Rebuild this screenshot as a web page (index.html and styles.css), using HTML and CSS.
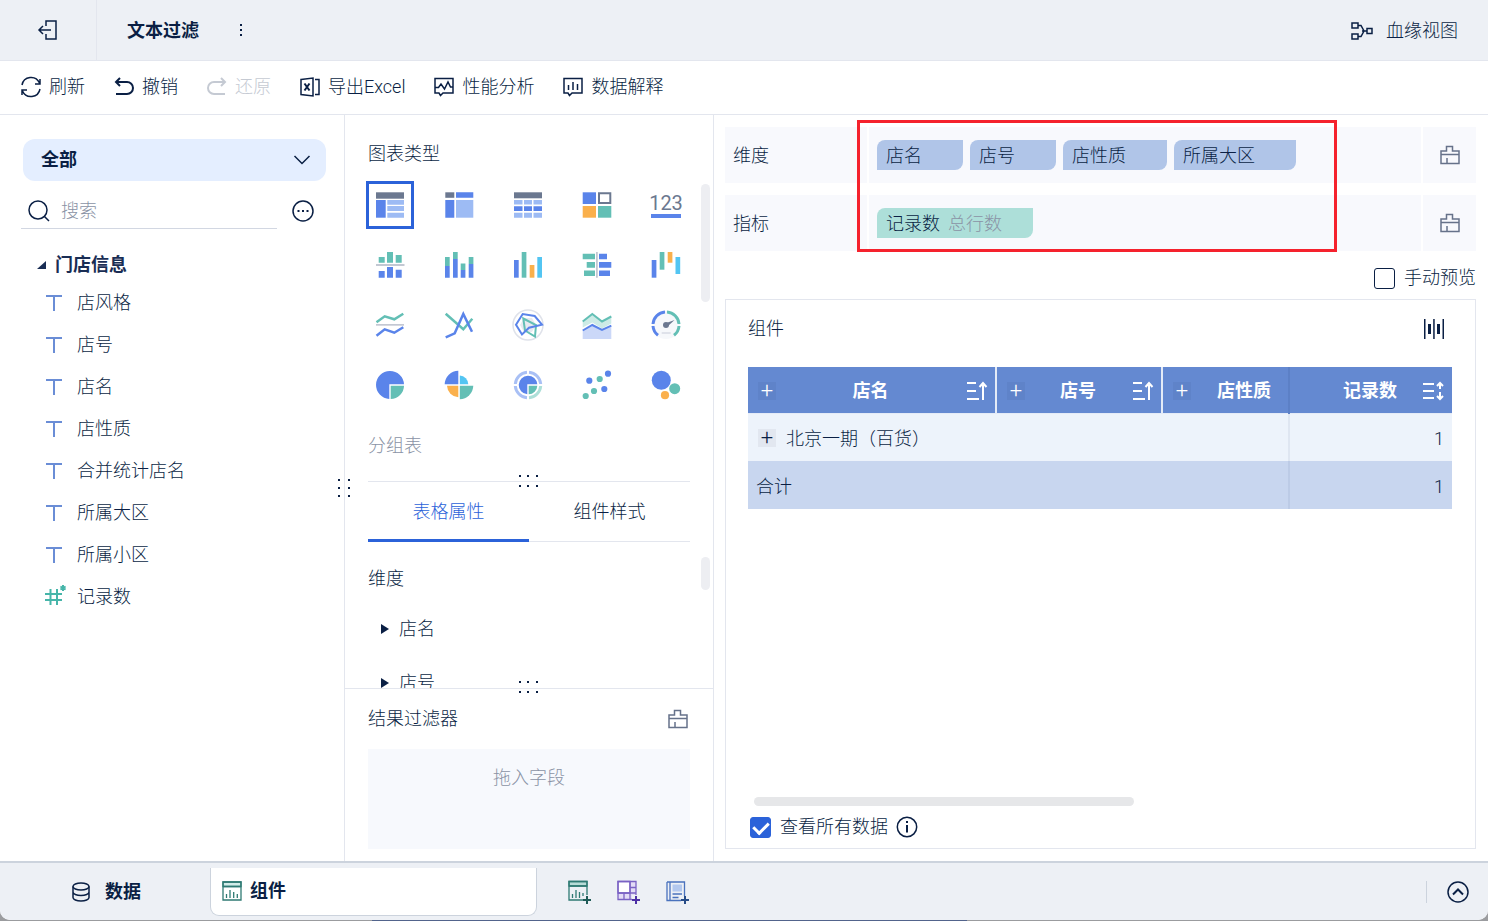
FILE: index.html
```html
<!DOCTYPE html>
<html lang="zh-CN">
<head>
  <meta charset="UTF-8" />
  <meta name="viewport" content="width=device-width, initial-scale=1.0" />
  <title>文本过滤</title>
  <link rel="stylesheet" href="styles.css">
</head>
<body>
  <div class="app">
    <header class="header">
      <button class="back" aria-label="返回">
        <svg class="icon" width="22" height="22" viewBox="0 0 22 22"><path d="M9 7V2h10v18H9v-5M14 11H2M6 7l-4 4 4 4"/></svg>
      </button>
      <h1 class="title">文本过滤</h1>
      <button class="more" aria-label="更多">
        <svg class="dots" width="4" height="16" viewBox="0 0 4 16"><path d="M1 2h2v2H1zM1 7h2v2H1zM1 12h2v2H1z"/></svg>
      </button>
      <button class="lineage">
        <svg class="icon" width="22" height="20" viewBox="0 0 22 20"><path d="M1 2h6v5H1zM1 13h6v5H1zM7 4.500h3l3 5.500-3 5.500H7M11 10h5M16 7.500h5v5h-5z"/></svg>
        血缘视图
      </button>
    </header>

    <nav class="toolbar">
      <button class="tool">
        <svg class="icon" width="20" height="20" viewBox="0 0 20 20"><path d="M1 8a9.200 9.200 0 0 1 17.500-2M19 2v5h-5M19 12a9.200 9.200 0 0 1-17.500 2M1 18v-5h5"/></svg>
        刷新
      </button>
      <button class="tool">
        <svg class="icon bold" width="20" height="20" viewBox="0 0 20 20"><path d="M6 1L2 5l4 4M2 5h11a6 6 0 0 1 0 12H2"/></svg>
        撤销
      </button>
      <button class="tool" disabled>
        <svg class="icon bold" width="20" height="20" viewBox="0 0 20 20"><path d="M14 1l4 4-4 4M18 5H7a6 6 0 0 0 0 12H18"/></svg>
        还原
      </button>
      <button class="tool">
        <svg class="icon" width="20" height="20" viewBox="0 0 20 20"><path d="M1 2.500l12-1.500v18L1 17.500zM15 2.500h4v15h-4"/><path class="thick" d="M4.500 6.500l5 7M9.500 6.500l-5 7"/></svg>
        导出Excel
      </button>
      <button class="tool">
        <svg class="icon" width="20" height="20" viewBox="0 0 20 20"><path d="M1 1.500h18v14.500H9L6.500 18.500 5 16H1zM1 10.500h3.500L7 7l3.500 5 3.500-7 2.500 5H19"/></svg>
        性能分析
      </button>
      <button class="tool">
        <svg class="icon" width="20" height="20" viewBox="0 0 20 20"><path d="M1 1.500h18v14.500H9L6.500 18.500 5 16H1zM5.500 8v5M10 5v8M14.500 7v6"/></svg>
        数据解释
      </button>
    </nav>

    <main class="main">
      <aside class="fields">
        <div class="table-select">
          <select aria-label="数据表">
            <option>全部</option>
          </select>
          <svg class="icon chevron" width="18" height="18" viewBox="0 0 18 18"><path d="M1.500 5L9 12.500 16.500 5"/></svg>
        </div>
        <div class="search-row">
          <label class="search">
            <svg class="icon" width="22" height="22" viewBox="0 0 22 22"><circle cx="10" cy="10" r="9"/><path d="M16.500 16.500l4.500 4.500"/></svg>
            <input type="text" placeholder="搜索" aria-label="搜索">
          </label>
          <button class="search-more" aria-label="更多操作">
            <svg class="icon" width="22" height="22" viewBox="0 0 22 22"><circle cx="11" cy="11" r="10"/><path class="thick" d="M5.500 11h2M10 11h2M14.500 11h2"/></svg>
          </button>
        </div>
        <h2 class="group-title">
          <svg width="10" height="10" viewBox="0 0 10 10"><path d="M9 1v8H0z" fill="#192d54"/></svg>
          门店信息
        </h2>
        <ul class="field-list">
          <li><svg class="icon-text" width="18" height="18" viewBox="0 0 18 18"><path d="M1 2h16M9 2v15"/></svg>店风格</li>
          <li><svg class="icon-text" width="18" height="18" viewBox="0 0 18 18"><path d="M1 2h16M9 2v15"/></svg>店号</li>
          <li><svg class="icon-text" width="18" height="18" viewBox="0 0 18 18"><path d="M1 2h16M9 2v15"/></svg>店名</li>
          <li><svg class="icon-text" width="18" height="18" viewBox="0 0 18 18"><path d="M1 2h16M9 2v15"/></svg>店性质</li>
          <li><svg class="icon-text" width="18" height="18" viewBox="0 0 18 18"><path d="M1 2h16M9 2v15"/></svg>合并统计店名</li>
          <li><svg class="icon-text" width="18" height="18" viewBox="0 0 18 18"><path d="M1 2h16M9 2v15"/></svg>所属大区</li>
          <li><svg class="icon-text" width="18" height="18" viewBox="0 0 18 18"><path d="M1 2h16M9 2v15"/></svg>所属小区</li>
          <li><svg class="icon-number" width="18" height="18" viewBox="0 0 18 18"><path d="M0 6h17M0 12h17M5.500 1v16M12 1v16"/><path d="M18 -3v6M15.400 -1.500l5.200 3M20.600 -1.500l-5.200 3"/></svg>记录数</li>
        </ul>
        <svg class="grip grip-side" width="14" height="22" viewBox="0 0 14 22"><path d="M1 2h2v2H1zM1 10h2v2H1zM1 18h2v2H1zM11 2h2v2h-2zM11 10h2v2h-2zM11 18h2v2h-2z"/></svg>
      </aside>

      <section class="settings">
        <div class="chart-types">
          <h2 class="label">图表类型</h2>
          <div class="type-grid">
            <button class="type selected" aria-label="分组表">
              <svg width="32" height="32" viewBox="0 0 32 32"><path class="slate" d="M2 3.300h28v6.400H2z"/><path class="blue" d="M2 11h9.700v17.700H2z"/><path class="light" d="M13.300 11H30v4.700H13.300zM13.300 17H30v5H13.300zM13.300 23.700H30v5H13.300z"/></svg>
            </button>
            <button class="type" aria-label="交叉表">
              <svg width="32" height="32" viewBox="0 0 32 32"><path class="slate" d="M2.300 3.300h9v5.500h-9z"/><path class="blue" d="M13 3.300h17.300v5.500H13zM2.300 11h9v17.700h-9z"/><path class="light" d="M13 11h17.300v17.700H13z"/></svg>
            </button>
            <button class="type" aria-label="明细表">
              <svg width="32" height="32" viewBox="0 0 32 32"><path class="slate" d="M2 3.300h28v6H2z"/><path class="light" d="M2 11h8.500v4.500H2zM12 11h8v4.500h-8zM21.500 11H30v4.500h-8.500zM2 23.700h8.500v5H2zM12 23.700h8v5h-8zM21.500 23.700H30v5h-8.500z"/><path class="blue" d="M2 17.300h8.500v4.700H2zM12 17.300h8v4.700h-8zM21.500 17.300H30v4.700h-8.500z"/></svg>
            </button>
            <button class="type" aria-label="颜色表格">
              <svg width="32" height="32" viewBox="0 0 32 32"><path class="blue" d="M1.700 3.300H15V15H1.700z"/><path d="M18 4.300h11.300V14H18z" fill="none" stroke="#6b7890" stroke-width="2"/><path class="orange" d="M1.700 17H15v11.700H1.700z"/><path class="green" d="M17 17h13.300v11.700H17z"/></svg>
            </button>
            <button class="type kpi" aria-label="KPI指标卡"><span>123</span></button>

            <button class="type" aria-label="对比柱形图">
              <svg width="32" height="32" viewBox="0 0 32 32"><path class="green" d="M4.700 8h6v5.700h-6zM13 3h6v10.700h-6zM21.700 6h6v7.700h-6z"/><path class="gray" d="M2 15h28.500v2H2z"/><path class="blue" d="M4.700 22h6v6.700h-6zM13 18h6v10.700h-6zM21.700 20.700h6v8h-6z"/></svg>
            </button>
            <button class="type" aria-label="堆积柱形图">
              <svg width="32" height="32" viewBox="0 0 32 32"><path class="green" d="M2 8h4.700v9H2zM10 3h4.700v7H10zM17.700 14.500h4.700V21h-4.700zM25.700 8h4.700v7h-4.700z"/><path class="blue" d="M2 17h4.700v11.700H2zM10 10h4.700v18.700H10zM17.700 21h4.700v7.700h-4.700zM25.700 15h4.700v13.700h-4.700z"/></svg>
            </button>
            <button class="type" aria-label="分区柱形图">
              <svg width="32" height="32" viewBox="0 0 32 32"><path class="blue" d="M2 11h4.700v17.700H2z"/><path class="green" d="M9.700 3h4.700v25.700H9.700z"/><path class="orange" d="M17.700 16h4.700v12.700h-4.700z"/><path class="cyan" d="M25.300 8H30v20.700h-4.700z"/></svg>
            </button>
            <button class="type" aria-label="对比条形图">
              <svg width="32" height="32" viewBox="0 0 32 32"><path class="green" d="M1.700 4.700H14v5.600H1.700zM5.700 13H14v5.700H5.700zM3 21.500h11v5.500H3z"/><path class="gray" d="M15 3h1.800v25.700H15z"/><path class="blue" d="M18 4.700h8v5.600h-8zM18 13h12.300v5.700H18zM18 21.500h11v5.500H18z"/></svg>
            </button>
            <button class="type" aria-label="瀑布图">
              <svg width="32" height="32" viewBox="0 0 32 32"><path class="blue" d="M1.700 11h4.700v17.700H1.700z"/><path class="green" d="M9.700 3h4.700v17.700H9.700z"/><path class="orange" d="M17.700 3h4.700v10.700h-4.700z"/><path class="cyan" d="M25.500 8h4.700v17h-4.700z"/></svg>
            </button>

            <button class="type" aria-label="范围折线图">
              <svg width="32" height="32" viewBox="0 0 32 32"><path class="line-green" d="M2.500 13.300l8.200-6 9.600 3 9-5.600"/><path class="gray" d="M2 15h28v1.700H2z"/><path class="line-blue" d="M2.500 26.700l8.200-6.400 9.600 3.400 9-5.400"/></svg>
            </button>
            <button class="type" aria-label="折线图">
              <svg width="32" height="32" viewBox="0 0 32 32"><path class="line-green" d="M2.700 4.700l17.600 15.600 9-10.600"/><path class="line-blue" d="M2.700 28.300l9-4L20.300 5 29 22.700"/></svg>
            </button>
            <button class="type" aria-label="雷达图">
              <svg width="32" height="32" viewBox="0 0 32 32"><circle cx="16" cy="16" r="15" fill="none" stroke="#dfe2ea" stroke-width="1.500"/><path d="M8 16l4-7 8 0 4 7-4 7h-8z" fill="#e8eaf0"/><path class="line-green thin" d="M11.300 9.500l12.700 6.500-1 11.500-10-6z"/><path class="line-blue thin" d="M4 15.700l6.700-10.700 12 2 7.300 8.700-13 3-7 6.800z"/></svg>
            </button>
            <button class="type" aria-label="面积图">
              <svg width="32" height="32" viewBox="0 0 32 32"><path d="M1.700 12.500l9.600-7.500 9.700 7.500 9.300-5v7l-9.300 5-9.700-6-9.600 5z" fill="#cdebe6"/><path d="M1.700 21.500l9.600-5.800 9.700 5.300 9.300-4.300V30H1.700z" fill="#cbd8f8"/><path class="line-green thin" d="M1.700 12.500l9.600-7.500 9.700 7.500 9.300-5"/><path class="line-blue thin" d="M1.700 21.500l9.600-5.500 9.700 5 9.300-4.300"/></svg>
            </button>
            <button class="type" aria-label="仪表盘">
              <svg width="32" height="32" viewBox="0 0 32 32"><circle cx="16" cy="16" r="14" fill="#f6f8fb"/><path class="line-blue arc" d="M8 26.300A13 13 0 0 1 3 17M3 15A13 13 0 0 1 15 3"/><path class="line-green arc" d="M17 3a13 13 0 0 1 12 12M29 17a13 13 0 0 1-5 9.300"/><path class="slate" d="M15 14.500l9.500-3.500L17 18z"/><circle class="slate" cx="16" cy="16" r="3"/><path d="M11.700 23h9v2h-9z" fill="#dfe2ea"/></svg>
            </button>

            <button class="type" aria-label="饼图">
              <svg width="32" height="32" viewBox="0 0 32 32"><path class="blue" d="M15.300 30A14 14 0 1 1 30 15.300H15.300z"/><path class="green" d="M16.700 16.700H30A13.500 13.500 0 0 1 16.700 30z"/></svg>
            </button>
            <button class="type" aria-label="玫瑰图">
              <svg width="32" height="32" viewBox="0 0 32 32"><path class="blue" d="M15.300 1.700v13.600H1.700A14 14 0 0 1 15.300 1.700z"/><path class="cyan" d="M16.800 6.500a9 9 0 0 1 8.500 8.800h-8.500z"/><path class="orange" d="M15.300 16.800v11.500A12 12 0 0 1 4 16.800z"/><path class="green" d="M16.800 16.800h13.500a14 14 0 0 1-13.500 13.500z"/></svg>
            </button>
            <button class="type" aria-label="多层饼图">
              <svg width="32" height="32" viewBox="0 0 32 32"><g fill="none" stroke-width="3"><path stroke="#a9c0f5" d="M15 28.700A12.700 12.700 0 0 1 3.300 17M3.300 15A12.700 12.700 0 0 1 15 3.300M17 3.300A12.700 12.700 0 0 1 28.700 15"/><path stroke="#addfd8" d="M28.700 17A12.700 12.700 0 0 1 17 28.700"/></g><path class="blue" d="M15.300 25.300A9.300 9.300 0 1 1 25.300 15.300h-10z"/><path class="green" d="M16.700 16.700h8.600a9 9 0 0 1-8.600 8.600z"/></svg>
            </button>
            <button class="type" aria-label="散点图">
              <svg width="32" height="32" viewBox="0 0 32 32"><g class="blue"><circle cx="8.300" cy="11.700" r="3.100"/><circle cx="27" cy="4.700" r="3.100"/><circle cx="23.300" cy="20" r="3.100"/></g><g class="green"><circle cx="18.700" cy="10" r="3.100"/><circle cx="4.700" cy="27" r="3.100"/><circle cx="13" cy="22" r="3.100"/></g></svg>
            </button>
            <button class="type" aria-label="聚合气泡图">
              <svg width="32" height="32" viewBox="0 0 32 32"><circle class="blue" cx="11.300" cy="11.200" r="9.500"/><circle class="green" cx="24.700" cy="19.700" r="5.500"/><circle class="orange" cx="15" cy="26.200" r="4.100"/></svg>
            </button>
          </div>
          <p class="type-name">分组表</p>
          <span class="thumb thumb-types"></span>
        </div>

        <div class="properties">
          <svg class="grip grip-top" width="22" height="14" viewBox="0 0 22 14"><path d="M2 1h2v2H2zM10 1h2v2h-2zM19 1h2v2h-2zM2 11h2v2H2zM10 11h2v2h-2zM19 11h2v2h-2z"/></svg>
          <div class="tabs">
            <button class="tab active">表格属性</button>
            <button class="tab">组件样式</button>
          </div>
          <div class="property-list">
            <h2 class="label">维度</h2>
            <button class="fold"><svg width="8" height="10" viewBox="0 0 8 10"><path d="M0 0l8 5-8 5z" fill="#0a1f44"/></svg>店名</button>
            <button class="fold"><svg width="8" height="10" viewBox="0 0 8 10"><path d="M0 0l8 5-8 5z" fill="#0a1f44"/></svg>店号</button>
            <span class="thumb thumb-properties"></span>
          </div>
        </div>

        <div class="filter">
          <svg class="grip grip-filter" width="22" height="14" viewBox="0 0 22 14"><path d="M2 1h2v2H2zM10 1h2v2h-2zM19 1h2v2h-2zM2 11h2v2H2zM10 11h2v2h-2zM19 11h2v2h-2z"/></svg>
          <div class="filter-head">
            <h2 class="label">结果过滤器</h2>
            <button aria-label="清空过滤器">
              <svg class="brush" width="20" height="20" viewBox="0 0 20 20"><path d="M1 18.500V6h5.500V1.500h6V6H19v12.500zM1 9.500h18M7 18v-5"/></svg>
            </button>
          </div>
          <div class="dropzone">拖入字段</div>
        </div>
      </section>

      <section class="preview">
        <div class="shelf">
          <div class="shelf-name">维度</div>
          <div class="shelf-body">
            <button class="chip">店名</button>
            <button class="chip">店号</button>
            <button class="chip">店性质</button>
            <button class="chip">所属大区</button>
          </div>
          <button class="shelf-clear" aria-label="清空维度">
            <svg class="brush" width="20" height="20" viewBox="0 0 20 20"><path d="M1 18.500V6h5.500V1.500h6V6H19v12.500zM1 9.500h18M7 18v-5"/></svg>
          </button>
        </div>
        <div class="shelf">
          <div class="shelf-name">指标</div>
          <div class="shelf-body">
            <button class="chip measure">记录数 <span>总行数</span></button>
          </div>
          <button class="shelf-clear" aria-label="清空指标">
            <svg class="brush" width="20" height="20" viewBox="0 0 20 20"><path d="M1 18.500V6h5.500V1.500h6V6H19v12.500zM1 9.500h18M7 18v-5"/></svg>
          </button>
        </div>
        <div class="highlight"></div>

        <label class="check manual"><input type="checkbox">手动预览</label>

        <div class="widget">
          <div class="widget-head">
            <h2 class="label">组件</h2>
            <button aria-label="列宽">
              <svg width="20" height="20" viewBox="0 0 20 20" fill="#0a1f44"><path d="M0 0h1.500v20H0zM9.200 0h1.500v20H9.200zM18.500 0H20v20h-1.500zM4 5h3v10H4zM13 5h3v10h-3z"/></svg>
            </button>
          </div>
          <table class="grid">
            <colgroup>
              <col class="col-name">
              <col class="col-no">
              <col class="col-kind">
              <col class="col-count">
            </colgroup>
            <thead>
              <tr>
                <th><div class="cell"><button class="expand" aria-label="展开店名">+</button><span>店名</span><svg class="sort" width="22" height="20" viewBox="0 0 22 20"><path d="M2 2h9M2 10h9M2 18h12M18 19V4M14.500 6L18 2l3.500 4"/></svg></div></th>
                <th><div class="cell"><button class="expand" aria-label="展开店号">+</button><span>店号</span><svg class="sort" width="22" height="20" viewBox="0 0 22 20"><path d="M2 2h9M2 10h9M2 18h12M18 19V4M14.500 6L18 2l3.500 4"/></svg></div></th>
                <th><div class="cell"><button class="expand" aria-label="展开店性质">+</button><span>店性质</span></div></th>
                <th><div class="cell"><span>记录数</span><svg class="sort" width="22" height="20" viewBox="0 0 22 20"><path d="M1 3h11M1 10h11M1 17h11M18 2v6M15 5l3-3 3 3M18 11v7M15 15l3 3 3-3"/></svg></div></th>
              </tr>
            </thead>
            <tbody>
              <tr>
                <td colspan="3"><button class="expand" aria-label="展开北京一期">+</button>北京一期（百货）</td>
                <td class="num">1</td>
              </tr>
              <tr class="total">
                <td colspan="3">合计</td>
                <td class="num">1</td>
              </tr>
            </tbody>
          </table>
          <div class="widget-foot">
            <span class="scroll-x"></span>
            <div class="all-data">
              <label class="check"><input type="checkbox" checked>查看所有数据</label>
              <svg class="icon" width="22" height="22" viewBox="0 0 22 22"><circle cx="11" cy="11" r="9.700"/><path class="thick" d="M11 9v7.500M11 5v2"/></svg>
            </div>
          </div>
        </div>
      </section>
    </main>

    <footer class="footer">
      <button class="sheet">
        <svg class="icon" width="18" height="20" viewBox="0 0 18 20"><ellipse cx="9" cy="4.500" rx="8" ry="3.500"/><path d="M1 4.500v11c0 2 3.600 3.500 8 3.500s8-1.500 8-3.500v-11M1 10c0 2 3.600 3.500 8 3.500s8-1.500 8-3.500"/></svg>
        数据
      </button>
      <button class="sheet current">
        <svg width="20" height="20" viewBox="0 0 20 20" fill="none" stroke="#2f7a73" stroke-width="1.300"><path d="M1 1h18v4.500H1z" fill="#d3ece9"/><path d="M1 1h18v18H1zM1 5.500h18M4.500 13v4M8 9v8M11.700 11v6M15.300 13v4"/></svg>
        组件
      </button>
      <div class="add">
        <button aria-label="添加组件">
          <svg width="24" height="24" viewBox="0 0 24 24" fill="none" stroke="#2f7a73" stroke-width="1.300"><path d="M1 1.500h18V6H1z" fill="#b8dcd7"/><path d="M15 20H1V1.500h18V15M1 6h18M4.500 14v4M8 10v8M11.500 12v6M15 13v3"/><path d="M19 16v8M15 20h8" stroke="#1f5b57" stroke-width="2"/></svg>
        </button>
        <button aria-label="添加仪表板">
          <svg width="24" height="24" viewBox="0 0 24 24" fill="none" stroke="#7a62c4" stroke-width="1.300"><path d="M1 1.500h18V15h-4v4.500H1z" fill="#e3dcf6" stroke="none"/><path d="M1 1.500h12V13H1z" fill="#fff"/><path d="M15 19.500H1V1.500h18V15M13 1.500V13M1 13h18M13 7.500h6M7 13v6.500M13 13v6.500"/><path d="M19 16v8M15 20h8" stroke="#4c2fa5" stroke-width="2"/></svg>
        </button>
        <button aria-label="添加报告">
          <svg width="24" height="24" viewBox="0 0 24 24" fill="none" stroke="#4a72bd" stroke-width="1.300"><path d="M1 2h17.500v14M1 2v18.500h14M4 2v18.500"/><path d="M6.500 4.500h9.500v7H6.500z" fill="#b3c8ee" stroke="none"/><path d="M6.500 14h9.500M6.500 17.500h6"/><path d="M19 16v8M15 20h8" stroke="#274c87" stroke-width="2"/></svg>
        </button>
      </div>
      <button class="collapse" aria-label="收起">
        <svg class="icon" width="22" height="22" viewBox="0 0 22 22"><circle cx="11" cy="11" r="10"/><path class="thick" d="M6 13.500l5-5 5 5"/></svg>
      </button>
    </footer>
  </div>
</body>
</html>
```
FILE: styles.css
```css
* {
  box-sizing: border-box;
}

body {
  margin: 0;
  background: linear-gradient(90deg, #9b9c9f 25%, #52648c 25%, #52648c 65%, #9b9c9f 65%);
  font-family: Roboto, "Noto Sans CJK SC", sans-serif;
  font-size: 18px;
  font-weight: 300;
  line-height: 24px;
  color: #0a1f44;
}

button,
input,
select {
  font: inherit;
  color: inherit;
}

button {
  display: flex;
  align-items: center;
  padding: 0;
  border: none;
  background: none;
  cursor: pointer;
}

h1,
h2,
p,
ul {
  margin: 0;
  padding: 0;
  font-size: 18px;
}

svg {
  flex: none;
  overflow: visible;
}

.app {
  display: flex;
  flex-direction: column;
  height: calc(100vh - 1px);
  background: #fff;
  border-radius: 0 0 10px 10px;
  overflow: hidden;
}

.icon {
  fill: none;
  stroke: currentColor;
  stroke-width: 1.5;
}

.icon.bold,
.thick {
  stroke-width: 2;
}

.brush {
  fill: none;
  stroke: #66728a;
  stroke-width: 1.5;
}

.label {
  font-weight: 300;
}

/* header */
.header {
  display: flex;
  align-items: center;
  height: 61px;
  padding-right: 30px;
  background: #edf0f5;
  border-bottom: 1px solid #e3e6ee;
}

.back {
  width: 97px;
  height: 60px;
  justify-content: center;
  border-right: 1px solid #e3e6ee;
}

.title {
  padding: 2px 0 0 30px;
  font-weight: 700;
}

.more {
  margin-left: 40px;
}

.dots,
.grip {
  fill: #0a1f44;
}

.lineage {
  margin-left: auto;
  padding-top: 1px;
  gap: 13px;
}

/* toolbar */
.toolbar {
  display: flex;
  align-items: center;
  gap: 29px;
  height: 54px;
  padding: 0 21px 2px;
  border-bottom: 1px solid #e3e6ee;
}

.tool {
  gap: 8px;
}

.tool:disabled {
  color: #c5cad3;
}

.main {
  display: flex;
  flex: 1;
  min-height: 0;
}

/* fields */
.fields {
  position: relative;
  flex: 0 0 345px;
  padding: 24px 18px 0 23px;
  border-right: 1px solid #e3e6ee;
}

.table-select {
  position: relative;
}

.table-select select {
  width: 100%;
  height: 42px;
  padding: 0 18px;
  border: none;
  border-radius: 12px;
  background: #e4eeff;
  font-weight: 700;
  appearance: none;
}

.chevron {
  position: absolute;
  right: 15px;
  top: 12px;
  pointer-events: none;
}

.search-row {
  display: flex;
  align-items: center;
  justify-content: space-between;
  height: 60px;
  padding-right: 12px;
}

.search {
  display: flex;
  align-items: center;
  gap: 11px;
  width: 256px;
  height: 36px;
  margin-left: -2px;
  padding-left: 7px;
  border-bottom: 1px solid #d2d7e2;
}

.search input {
  flex: 1;
  min-width: 0;
  padding: 0;
  border: none;
  outline: none;
  background: none;
}

.search input::placeholder {
  color: #8a93a5;
}

.group-title {
  display: flex;
  align-items: center;
  gap: 8px;
  height: 34px;
  margin-top: 7px;
  padding-left: 14px;
  font-weight: 700;
  color: #192d54;
}

.field-list {
  list-style: none;
}

.field-list li {
  display: flex;
  align-items: center;
  gap: 14px;
  height: 42px;
  padding-left: 22px;
}

.icon-text,
.icon-number {
  fill: none;
  stroke: #6a8dd6;
  stroke-width: 2;
}

.icon-number {
  stroke: #46b5a9;
}

.grip {
  position: absolute;
}

.grip-side {
  right: -7px;
  top: 362px;
}

/* chart settings */
.settings {
  flex: 0 0 369px;
  display: flex;
  flex-direction: column;
  border-right: 1px solid #e3e6ee;
}

.chart-types {
  position: relative;
  padding: 27px 23px 23px;
}

.type-grid {
  display: grid;
  grid-template-columns: repeat(5, 48px);
  justify-content: space-between;
  row-gap: 12px;
  margin: 15px 0 25px -2px;
}

.type {
  height: 48px;
  justify-content: center;
}

.type.selected {
  border: 3px solid #2b62d9;
}

.kpi span {
  display: flex;
  justify-content: center;
  width: 30px;
  border-bottom: 4px solid #5a84ea;
  font-size: 20px;
  font-weight: 400;
  line-height: 22px;
  color: #6b7890;
}

.blue { fill: #5a84ea; }
.light { fill: #9dbbf4; }
.slate { fill: #6b7890; }
.gray { fill: #c3c8d3; }
.green { fill: #63bfb5; }
.orange { fill: #fab04c; }
.cyan { fill: #53c5f2; }

.line-blue,
.line-green {
  fill: none;
  stroke: #5a84ea;
  stroke-width: 2.5;
}

.line-green {
  stroke: #63bfb5;
}

.thin {
  stroke-width: 2;
}

.arc {
  stroke-width: 3;
}

.type-name,
.dropzone {
  color: #8a93a5;
}

.thumb {
  position: absolute;
  right: 3px;
  width: 9px;
  border-radius: 5px;
  background: #edeef2;
}

.thumb-types {
  top: 69px;
  height: 118px;
}

.thumb-properties {
  top: 15px;
  height: 33px;
}

.properties {
  position: relative;
  display: flex;
  flex-direction: column;
  flex: 1;
  min-height: 0;
}

.grip-top,
.grip-filter {
  left: 172px;
  top: -7px;
}

.grip-filter {
  top: -9px;
}

.tabs {
  display: flex;
  height: 61px;
  margin: 0 23px;
  border-top: 1px solid #e3e6ee;
  border-bottom: 1px solid #e3e6ee;
}

.tab {
  flex: 1;
  height: 60px;
  padding-top: 2px;
  justify-content: center;
  border-bottom: 3px solid transparent;
}

.tab.active {
  color: #2b62d9;
  border-bottom-color: #2b62d9;
}

.property-list {
  position: relative;
  flex: 1;
  min-height: 0;
  padding: 25px 23px 0;
  overflow: hidden;
}

.fold {
  gap: 10px;
  height: 54px;
  padding-left: 13px;
}

.property-list .label {
  margin-bottom: 11px;
}

.filter {
  position: relative;
  padding: 18px 23px 12px;
  border-top: 1px solid #e3e6ee;
}

.filter-head,
.widget-head {
  display: flex;
  align-items: center;
  justify-content: space-between;
}

.filter-head {
  padding-right: 2px;
}

.dropzone {
  height: 100px;
  margin-top: 18px;
  padding-top: 17px;
  background: #f7f9fd;
  text-align: center;
}

/* preview */
.preview {
  position: relative;
  flex: 1;
  min-width: 0;
  display: flex;
  flex-direction: column;
  padding: 12px 12px 12px 11px;
}

.shelf {
  display: flex;
  gap: 2px;
  height: 56px;
  margin-bottom: 12px;
}

.shelf-name,
.shelf-body,
.shelf-clear {
  display: flex;
  align-items: center;
  background: #f8f9fd;
}

.shelf-name {
  width: 142px;
  padding: 2px 0 0 8px;
}

.shelf-body {
  flex: 1;
  gap: 7px;
  padding-left: 8px;
}

.shelf-clear {
  width: 53px;
  justify-content: center;
}

.chip {
  height: 30px;
  padding: 1px 41px 0 9px;
  border-radius: 8px 0;
  background: #b0c5e8;
}

.chip.measure {
  gap: 8px;
  padding-right: 31px;
  background: #addfd9;
}

.chip span {
  color: #8a93a5;
}

/* frame round both shelves */
.highlight {
  position: absolute;
  left: 143px;
  top: 5px;
  width: 480px;
  height: 132px;
  border: 3px solid #f5222d;
  pointer-events: none;
}

.check {
  display: flex;
  align-items: center;
  gap: 9px;
}

.check input {
  width: 21px;
  height: 21px;
  margin: 0;
  border: 1px solid #0a1f44;
  border-radius: 3px;
  background: #fff;
  appearance: none;
}

.check input:checked {
  display: flex;
  justify-content: center;
  border-color: #2b62d9;
  background: #2b62d9;
}

.check input:checked::before {
  content: "";
  width: 7px;
  height: 12px;
  margin-top: 1px;
  border: solid #fff;
  border-width: 0 3px 3px 0;
  transform: rotate(45deg);
}

.manual {
  align-self: flex-end;
  margin: 3px 0 9px;
}

.widget {
  flex: 1;
  display: flex;
  flex-direction: column;
  padding: 17px 23px 9px 22px;
  border: 1px solid #e3e6ee;
}

.widget-head {
  padding-right: 8px;
}

.grid {
  width: 100%;
  margin-top: 26px;
  border-collapse: collapse;
  table-layout: fixed;
}

.col-name { width: 248px; }
.col-no { width: 166px; }
.col-kind { width: 127px; }
.col-count { width: 163px; }

.grid th {
  height: 46px;
  padding: 2px 8px 0 10px;
  background: #6489d1;
  border-right: 2px solid #e4ebf7;
  border-bottom: 1px solid #e4ebf7;
  color: #fff;
}

.grid th:nth-child(3) {
  border-right: 2px solid #5c80c6;
}

.grid th:last-child {
  border-right: none;
}

.cell {
  display: flex;
  align-items: center;
}

.cell span {
  flex: 1;
  text-align: center;
}

.grid th:nth-child(3) span {
  padding-right: 9px;
  text-align: right;
}

.grid th:last-child span {
  padding-right: 25px;
  text-align: right;
}

.sort {
  fill: none;
  stroke: #fff;
  stroke-width: 2;
}

.grid td {
  height: 48px;
  padding: 3px 8px 0;
  background: #edf3fb;
}

.grid td:first-child {
  border-right: 2px solid #dfe6f1;
}

.grid .total td {
  background: #c8d6ef;
}

.grid .total td:first-child {
  border-right-color: #bccbe6;
}

.grid .num {
  text-align: right;
}

.expand {
  display: inline-flex;
  justify-content: center;
  width: 18px;
  height: 18px;
  background: #5f83c9;
  font-size: 22px;
  font-weight: 300;
  line-height: 18px;
}

td .expand {
  margin: 0 10px 0 2px;
  background: #e2e7f0;
}

.widget-foot {
  margin-top: auto;
}

.scroll-x {
  display: block;
  width: 54%;
  height: 9px;
  margin: 0 0 9px 6px;
  border-radius: 5px;
  background: #e6e7e9;
}

.all-data {
  display: flex;
  align-items: center;
  gap: 8px;
  padding-left: 2px;
}

/* footer */
.footer {
  display: flex;
  align-items: center;
  height: 59px;
  padding-right: 19px;
  background: #edf0f5;
  border-top: 2px solid #ccd3dd;
}

.sheet {
  width: 210px;
  height: 48px;
  gap: 15px;
  padding-left: 72px;
  font-weight: 700;
}

.sheet.current {
  width: 327px;
  gap: 8px;
  padding-left: 11px;
  background: #fff;
  border: 1px solid #ccd3dd;
  border-top: none;
  border-radius: 0 0 9px 9px;
}

.add {
  display: flex;
  gap: 25px;
  padding-left: 31px;
}

.collapse {
  margin-left: auto;
  padding-left: 20px;
  border-left: 1px solid #ccd3dd;
}
```
